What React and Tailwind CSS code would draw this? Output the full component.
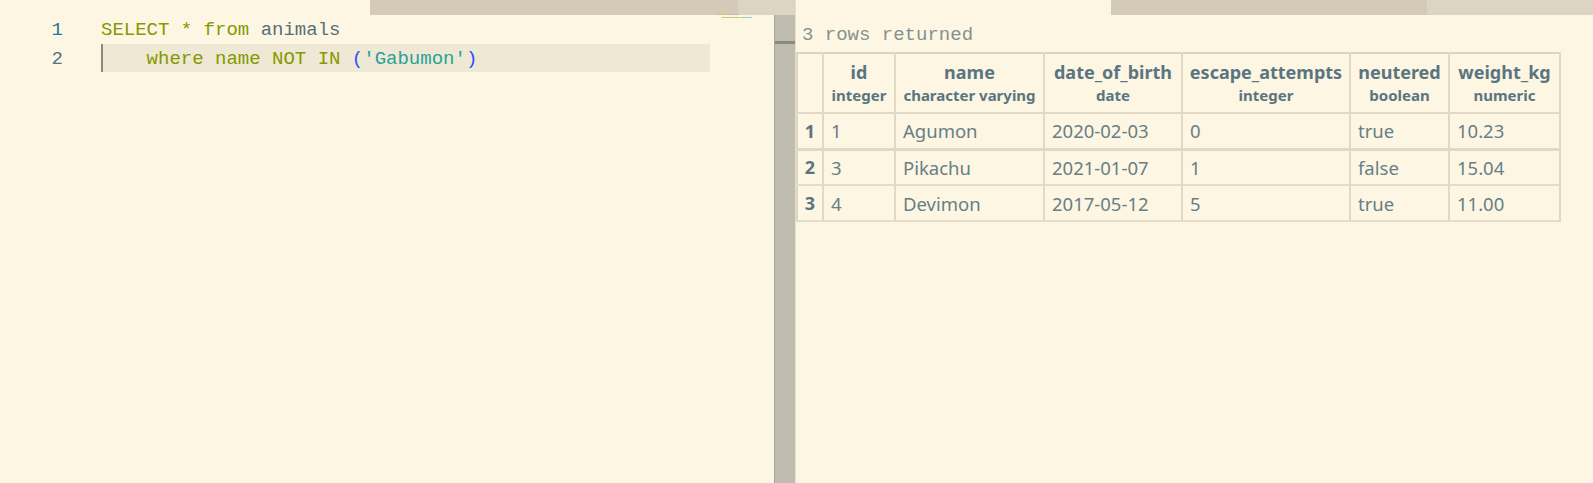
import React from 'react';

const mono = { fontFamily: '"Liberation Mono", "DejaVu Sans Mono", monospace' };

const columns = [
  { name: 'id', type: 'integer', w: 'w-[72px]' },
  { name: 'name', type: 'character varying', w: 'w-[149px]' },
  { name: 'date_of_birth', type: 'date', w: 'w-[138px]' },
  { name: 'escape_attempts', type: 'integer', w: 'w-[168px]' },
  { name: 'neutered', type: 'boolean', w: 'w-[99px]' },
  { name: 'weight_kg', type: 'numeric', w: 'w-[111px]' },
];

const rows = [
  ['1', 'Agumon', '2020-02-03', '0', 'true', '10.23'],
  ['3', 'Pikachu', '2021-01-07', '1', 'false', '15.04'],
  ['4', 'Devimon', '2017-05-12', '5', 'true', '11.00'],
];

function Editor() {
  return (
    <div className="relative flex w-[774px] shrink-0 flex-col">
      {/* horizontal scrollbar */}
      <div className="flex h-[15px] shrink-0">
        <div className="w-[370px]" />
        <div className="w-[368px] bg-[#d3cbb8]" />
        <div className="flex-1 bg-[#dcd5c3]" />
      </div>

      {/* minimap */}
      <div className="absolute left-[718px] top-[14px] flex flex-col gap-[2px]">
        <div className="flex gap-[1px]">
          <div className="h-[1px] w-[8px] bg-[#c3c77a]" />
          <div className="h-[1px] w-[3px] bg-[#c3c77a]" />
          <div className="h-[1px] w-[8px] bg-[#b9bdb9]" />
        </div>
        <div className="ml-[4px] flex gap-[1px]">
          <div className="h-[1px] w-[18px] bg-[#c3c77a]" />
          <div className="h-[1px] w-[11px] bg-[#93cfc8]" />
        </div>
      </div>

      <div className="pt-[1px] text-[19px]" style={mono}>
        <div className="flex h-[28px] items-center pt-[1px]">
          <div className="w-[63px] text-right text-[#237893]">1</div>
          <div className="ml-[38px] whitespace-pre">
            <span className="text-[#859900]">SELECT * from</span>
            <span className="text-[#586e75]"> animals</span>
          </div>
        </div>
        <div className="flex h-[28px] items-center">
          <div className="w-[63px] pt-[3px] text-right text-[#4f7482]">2</div>
          <div className="relative ml-[38px] flex h-full w-[609px] items-center whitespace-pre bg-[#eee8d5] pt-[3px]">
            <div className="absolute left-0 top-0 h-full w-[2px] bg-[#8c8a82]" />
            <span className="text-[#859900]">    where name NOT IN </span>
            <span className="text-[#2e4cff]">(</span>
            <span className="text-[#2aa198]">'Gabumon'</span>
            <span className="text-[#2e4cff]">)</span>
          </div>
        </div>
      </div>
    </div>
  );
}

function Results() {
  const sans = { fontFamily: '"Noto Sans", "Open Sans", sans-serif' };
  return (
    <div className="flex flex-1 flex-col">
      <div className="flex h-[15px] shrink-0">
        <div className="w-[315px]" />
        <div className="w-[316px] bg-[#d3cbb8]" />
        <div className="flex-1 bg-[#dcd5c3]" />
      </div>
      <div className="flex h-[37px] items-center pl-[6px] pt-[4px] text-[19px] text-[#84928f]" style={mono}>
        3 rows returned
      </div>
      <table
        className="w-[765px] table-fixed border-collapse border-2 border-[#ddd5c1] text-[#677f86]"
        style={sans}
      >
        <thead>
          <tr className="h-[60px] border-b-2 border-[#e0d9c6]">
            <th className="w-[26px] border-r-2 border-[#e0d9c6]" />
            {columns.map((c) => (
              <th
                key={c.name}
                className={`${c.w} border-r-2 border-[#e0d9c6] px-0 align-middle font-bold text-[#5a7580]`}
              >
                <div className="text-[18px] leading-[24px]">{c.name}</div>
                <div className="text-[15px] leading-[22px]">{c.type}</div>
              </th>
            ))}
          </tr>
        </thead>
        <tbody>
          {rows.map((r, i) => (
            <tr
              key={i}
              className={`h-[36px] ${i === 0 ? 'border-b-[3px] border-[#e0d9c6]' : 'border-b-2 border-[#e3dcc9]'}`}
            >
              <td className="border-r-2 border-[#e0d9c6] pt-[1px] text-center text-[18px] font-bold text-[#5a7580]">
                {i + 1}
              </td>
              {r.map((v, j) => (
                <td key={j} className="border-r-2 border-[#e0d9c6] px-[7px] pt-[1px] text-[18.5px]">
                  {v}
                </td>
              ))}
            </tr>
          ))}
        </tbody>
      </table>
    </div>
  );
}

export default function App() {
  return (
    <div className="flex h-[483px] w-[1593px] overflow-hidden bg-[#fdf6e3]">
      <Editor />
      <div className="flex w-[21px] shrink-0 flex-col">
        <div className="h-[15px] bg-[#dcd5c3]" />
        <div className="relative flex-1 border-l border-[#a8a49a] bg-[#c0bcb0]">
          <div className="absolute left-0 right-0 top-[26px] h-[3px] bg-[#868b87]" />
        </div>
      </div>
      <div className="w-px shrink-0 bg-[#e6dfcb]" />
      <Results />
    </div>
  );
}
